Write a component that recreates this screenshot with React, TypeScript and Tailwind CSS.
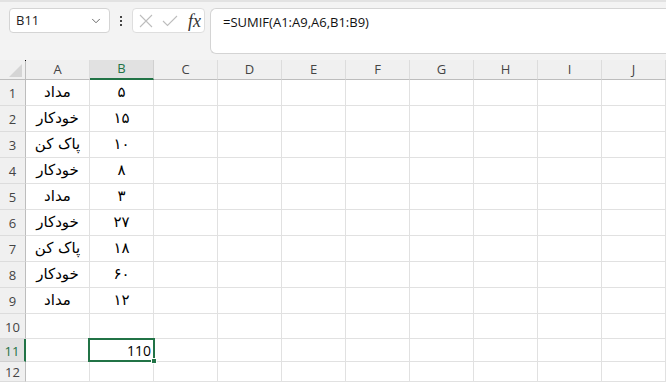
import { ChevronDown } from "lucide-react";

const COLS = ["A", "B", "C", "D", "E", "F", "G", "H", "I", "J"];

type Row = { n: number; h: string; a?: string; b?: string };

const ROWS: Row[] = [
  { n: 1, h: "h-[26px]", a: "مداد", b: "۵" },
  { n: 2, h: "h-[26px]", a: "خودکار", b: "۱۵" },
  { n: 3, h: "h-[26px]", a: "پاک کن", b: "۱۰" },
  { n: 4, h: "h-[26px]", a: "خودکار", b: "۸" },
  { n: 5, h: "h-[26px]", a: "مداد", b: "۳" },
  { n: 6, h: "h-[26px]", a: "خودکار", b: "۲۷" },
  { n: 7, h: "h-[26px]", a: "پاک کن", b: "۱۸" },
  { n: 8, h: "h-[26px]", a: "خودکار", b: "۶۰" },
  { n: 9, h: "h-[26px]", a: "مداد", b: "۱۲" },
  { n: 10, h: "h-[25px]" },
  { n: 11, h: "h-[23px]" },
  { n: 12, h: "h-[20px]" },
];

const ui = { fontFamily: '"Open Sans", "Noto Sans", sans-serif' };
const fa = { fontFamily: '"DejaVu Sans", "Noto Sans", sans-serif' };

function Toolbar() {
  return (
    <div className="relative h-[60px] border-t-2 border-[#e2e2e2] bg-[#f3f3f3]">
      <div className="flex items-start pl-[9px] pt-[6px]">
        {/* name box */}
        <div className="flex h-[25px] w-[101px] items-center justify-between rounded-[4px] border border-[#d4d4d4] bg-white pl-[6px] pr-[6px]">
          <span className="text-[13px] text-[#222]">B11</span>
          <ChevronDown className="h-[14px] w-[14px] text-[#555]" strokeWidth={1.5} />
        </div>
        {/* ellipsis */}
        <div className="flex h-[25px] w-[22px] flex-col items-center justify-center gap-[2px]">
          <div className="h-[2px] w-[2px] bg-[#444]" />
          <div className="h-[2px] w-[2px] bg-[#444]" />
          <div className="h-[2px] w-[2px] bg-[#444]" />
        </div>
        {/* fx box */}
        <div className="flex h-[25px] w-[73px] items-center rounded-[4px] border border-[#dedede] bg-white pl-[5px]">
          <svg width="14" height="14" viewBox="0 0 14 14" className="ml-[1px]">
            <path d="M1 1 L13 13 M13 1 L1 13" stroke="#bdbdbd" strokeWidth="1.1" fill="none" />
          </svg>
          <svg width="16" height="12" viewBox="0 0 16 12" className="ml-[9px]">
            <path d="M1 6 L5.5 10.5 L15 1" stroke="#bdbdbd" strokeWidth="1.1" fill="none" />
          </svg>
          <span
            className="ml-[10px] text-[18px] italic leading-none text-[#333]"
            style={{ fontFamily: '"Liberation Serif", "DejaVu Serif", serif' }}
          >
            fx
          </span>
        </div>
        {/* formula box */}
        <div className="ml-[5px] h-[46px] flex-1 rounded-l-[6px] border border-r-0 border-[#d4d4d4] bg-white pl-[12px] pt-[4px] text-[13px] leading-[18px] text-[#111]">
          =SUMIF(A1:A9,A6,B1:B9)
        </div>
      </div>
    </div>
  );
}

function HeaderRow() {
  return (
    <div className="flex h-[20px]">
      <div className="relative w-[26px] shrink-0 border-b border-r border-[#bdbdbd] bg-[#f0f0f0]">
        <div
          className="absolute bottom-[2px] right-[3px] h-[13px] w-[13px] bg-[#d5d5d5]"
          style={{ clipPath: "polygon(100% 0, 100% 100%, 0 100%)" }}
        />
        <div className="absolute right-[-1px] top-0 h-[1px] w-[1px] bg-black" />
      </div>
      {COLS.map((c) =>
        c === "B" ? (
          <div
            key={c}
            className="flex w-[64px] shrink-0 items-center justify-center border-b-2 border-r border-b-[#217346] border-r-[#d0d0d0] bg-[#e1e1e1] text-[13px] text-[#217346]"
          >
            {c}
          </div>
        ) : (
          <div
            key={c}
            className="flex w-[64px] shrink-0 items-center justify-center border-b border-r border-[#bdbdbd] border-r-[#dcdcdc] bg-[#f0f0f0] text-[13px] text-[#444]"
          >
            {c}
          </div>
        ),
      )}
    </div>
  );
}

function GridRow({ row }: { row: Row }) {
  const sel = row.n === 11;
  return (
    <div className={`flex ${row.h}`}>
      <div
        className={`relative flex w-[26px] shrink-0 items-center justify-center border-b border-r pt-[3px] text-[13px] ${
          sel
            ? "border-b-[#d0d0d0] border-r-[#217346] border-r-2 bg-[#e1e1e1] text-[#217346]"
            : "border-b-[#dcdcdc] border-r-[#bdbdbd] bg-[#f0f0f0] text-[#444]"
        }`}
      >
        {row.n}
      </div>
      {COLS.map((c) => {
        const text = c === "A" ? row.a : c === "B" ? row.b : undefined;
        const isSel = sel && c === "B";
        return (
          <div
            key={c}
            className="relative flex w-[64px] shrink-0 items-center justify-center border-b border-r border-[#e1e1e1] bg-white text-[15px] text-black"
          >
            {text && (
              <span dir="rtl" style={fa}>
                {text}
              </span>
            )}
            {isSel && (
              <div className="absolute left-[-2px] top-[-1px] z-10 flex h-[24px] w-[67px] items-center justify-end border-2 border-[#217346] pr-[2px]">
                <span className="text-[14px] text-black" style={ui}>
                  110
                </span>
                <div className="absolute bottom-[-4px] right-[-4px] h-[6px] w-[6px] border border-white bg-[#217346]" />
              </div>
            )}
          </div>
        );
      })}
    </div>
  );
}

export default function App() {
  return (
    <div className="h-[382px] w-[666px] overflow-hidden bg-white" style={ui}>
      <Toolbar />
      <HeaderRow />
      {ROWS.map((r) => (
        <GridRow key={r.n} row={r} />
      ))}
    </div>
  );
}
